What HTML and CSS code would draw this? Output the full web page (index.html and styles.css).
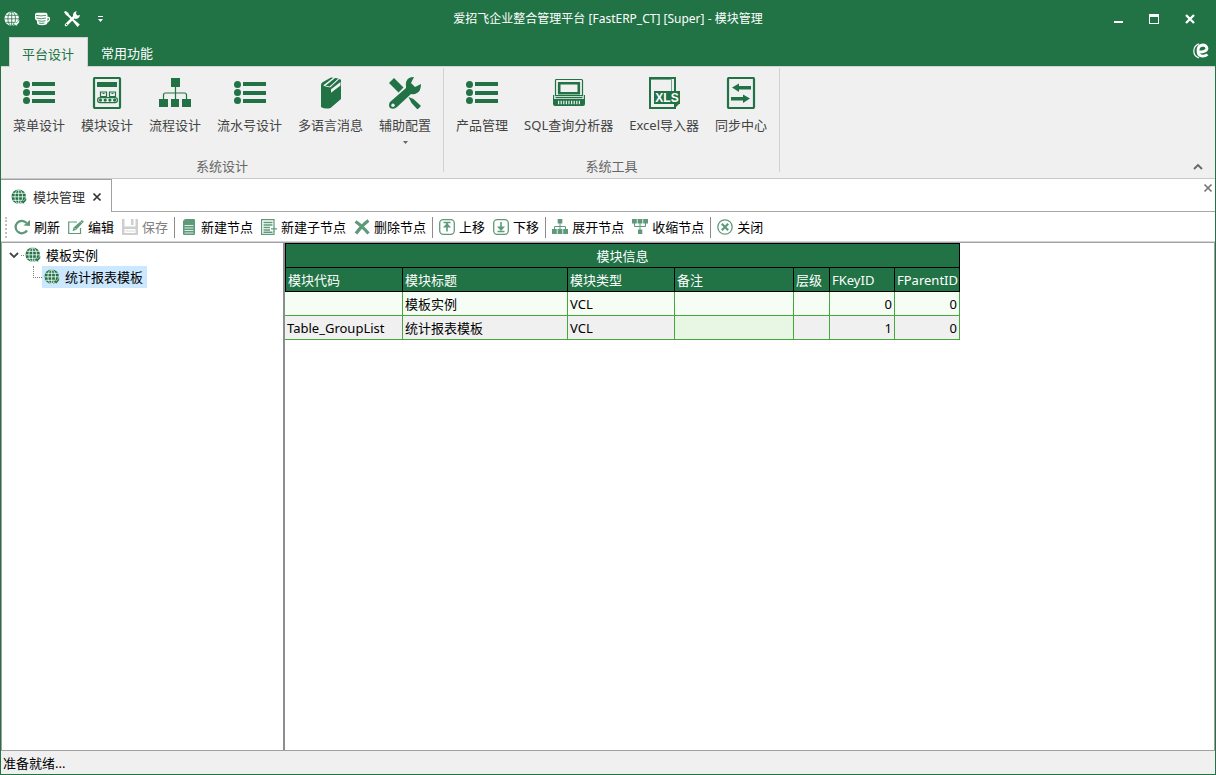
FILE: index.html
```
<!DOCTYPE html>
<html lang="zh-CN">
<head>
<meta charset="utf-8">
<title>爱招飞企业整合管理平台 [FastERP_CT] [Super] - 模块管理</title>
<link rel="stylesheet" href="styles.css">
</head>
<body>
<svg class="sprite" aria-hidden="true">
  <symbol id="globe" viewBox="0 0 16 16">
    <circle cx="7.700" cy="7.700" r="7.200" fill="currentColor"/>
    <g fill="none" stroke="var(--hole)" stroke-width=".8"><path d="M7.700 .8v14M.5 7.800h14.500M1.500 4.300h12.500M1.500 11.300h9"/><ellipse cx="7.700" cy="7.700" rx="3.800" ry="7"/></g>
    <path d="M9 13l2.800-2.300.4 1.200q1.800-.8 2.300-2.900l1.300.6q-.3 2.900-2.800 4.300l.5 1.300z" fill="currentColor" stroke="var(--hole)" stroke-width=".5"/>
  </symbol>
  <symbol id="list" viewBox="0 0 32 32">
    <g fill="currentColor"><circle cx="3.500" cy="7.500" r="3.500"/><circle cx="3.500" cy="15.500" r="3.500"/><circle cx="3.500" cy="23.500" r="3.500"/><path d="M9 5h23v4H9zM9 14h23v4H9zM9 22h23v4H9z"/></g>
  </symbol>
  <symbol id="module" viewBox="0 0 32 32">
    <rect x="3" y="1" width="26" height="30" rx="1" fill="none" stroke="currentColor" stroke-width="2.200"/>
    <path d="M6 5h20v5H6z" fill="currentColor"/>
    <g fill="none" stroke="currentColor" stroke-width="1.200"><path d="M9.500 15h6v4.500h-6zM18.500 15h6v4.500h-6zM11.500 16.500h2M20.500 16.500h2"/><rect x="6.600" y="20.600" width="19.800" height="5" rx="2.400"/></g>
    <g fill="currentColor"><circle cx="9.500" cy="23.100" r="1.600"/><circle cx="14.200" cy="23.100" r="1.600"/><circle cx="18.900" cy="23.100" r="1.600"/><circle cx="23.600" cy="23.100" r="1.600"/></g>
  </symbol>
  <symbol id="org" viewBox="0 0 32 32">
    <path d="M12 1h9v9h-9zM0 22h9v8H0zM12 22h8v8h-8zM23 22h9v8h-9z" fill="currentColor"/>
    <path d="M16.500 10v12M4.500 22v-4q0-2 2-2h19q2 0 2 2v4" fill="none" stroke="currentColor" stroke-width="1.200"/>
  </symbol>
  <symbol id="book" viewBox="0 0 32 32">
    <path d="M6 8Q6 6 8 5L16 .5l2.500.3L8.500 8.500q3 2 7 1.700L24 2l2 .8V22L15.500 31Q10 32.500 6 30z" fill="currentColor"/>
    <path d="M10.500 8.700L20 1l3.500.5-8.500 8z" fill="currentColor"/>
    <path d="M8.500 8.700L18.500 1M14.800 9.800L23.800 1.800" fill="none" stroke="var(--hole)" stroke-width=".9"/>
    <path d="M16 15.800v-3.600L25.500 5v3.600z" fill="var(--hole)"/>
  </symbol>
  <symbol id="tools" viewBox="0 0 32 32">
    <path d="M0 6l5-5 9.500 9.500-5 5z" fill="currentColor"/>
    <path d="M19.500 20l5 2 7.500 7-3.500 3.500-6-6.500z" fill="currentColor"/>
    <path d="M17 9Q16 2 22 .3L25 0l-3 6 4 4 6-3q0 7-4 9-3 2-6 1L8 30q-3 3-7 1-2-3 0-6l16-14z" fill="currentColor"/>
    <circle cx="4" cy="28.200" r="1.700" fill="var(--hole)"/>
  </symbol>
  <symbol id="computer" viewBox="0 0 32 32">
    <path d="M2.500 18.500V3.500q0-1 1-1h25q1 0 1 1v15" fill="none" stroke="currentColor" stroke-width="1.200"/>
    <path d="M6.200 6.200h19.600v10H6.200z" fill="none" stroke="currentColor" stroke-width="2.600"/>
    <path d="M2 18.600h28" stroke="currentColor" stroke-width="1.200"/>
    <path d="M.6 18v4M31.400 18v4" stroke="currentColor" stroke-width="1.200"/>
    <path d="M2.500 20h27v1.200h-27zM0 22h32v5q0 2-2 2H2q-2 0-2-2z" fill="currentColor"/>
    <path d="M5 25.500h23" stroke="var(--hole)" stroke-width="3.600" stroke-dasharray="1.200 1.400"/>
  </symbol>
  <symbol id="sync" viewBox="0 0 32 32">
    <rect x="3" y="1" width="26" height="30" rx="1" fill="none" stroke="currentColor" stroke-width="2.200"/>
    <path d="M7 10.500l7-4v2.500h12v3.500H14V15zM25 21.500l-7-4v2.500H6v3.500h12V26z" fill="currentColor"/>
  </symbol>
  <symbol id="database" viewBox="0 0 16 16">
    <path d="M1 3.500Q1 1.800 3 1.800h8.500q2 0 2 2V12q-1 2.200-5.500 2.200T3 12V10L1 8z" fill="currentColor"/>
    <path d="M12.500 6.500h2q1 0 1 1.500T14 10.500h-2" fill="none" stroke="currentColor" stroke-width="1.300"/>
    <path d="M2 4.300q5 1.200 10 0M2.500 7q4.500 1.500 9.500 0M4 9.700q4 1.200 7.500 0M5 12q3 .9 5.500 0" fill="none" stroke="var(--hole)" stroke-width=".8"/>
  </symbol>
  <symbol id="cross-tools" viewBox="0 0 16 16">
    <path d="M3 3l10 10" stroke="currentColor" stroke-width="2"/>
    <path d="M0 1l1.500-1 3 2v2L4 5 2 4z" fill="currentColor"/>
    <path d="M2 14L11 5" stroke="currentColor" stroke-width="2.600" stroke-linecap="round"/>
    <path d="M9 4q0-3 3.500-4L12 3l1.500 1.500L16 4q-.5 3.500-4 4L9 7zM9.500 11l1.500-1.500 4.800 4L13.500 16z" fill="currentColor"/>
    <circle cx="2.500" cy="13.500" r=".7" fill="var(--hole)"/>
  </symbol>
  <symbol id="refresh" viewBox="0 0 16 16">
    <path d="M13 11.500A6.200 6.200 0 1 1 12.500 4" fill="none" stroke="currentColor" stroke-width="2.300"/>
    <path d="M9.500 6.500L16 7V1z" fill="currentColor"/>
  </symbol>
  <symbol id="edit" viewBox="0 0 16 16">
    <path d="M9 3H.7v11.500h11.800V9" fill="none" stroke="currentColor" stroke-width="1.200"/>
    <path d="M4.500 12l1-3.500L14 1l1.800 1.800L8 11z" fill="currentColor"/><path d="M6 8.500L8 10.500M12.300 2.500l2 2" stroke="#fff" stroke-width=".6"/>
  </symbol>
  <symbol id="save" viewBox="0 0 16 16">
    <path d="M0 0h2.500v7.500h11V0H16v16H0z" fill="currentColor"/><path d="M9 0h2.500v6H9z" fill="currentColor"/><path d="M2.500 10h11v4h-11z" fill="#fff"/><path d="M3.500 12h9" stroke="currentColor" stroke-width=".8"/>
  </symbol>
  <symbol id="sheet" viewBox="0 0 16 16">
    <path d="M4 0h9q1 0 1 1v14q0 1-1 1H3q-1 0-1-1V2z" fill="currentColor"/><path d="M3.500 6.500h9M3.500 9h9M3.500 11.500h9M3.500 14h9" stroke="#fff" stroke-width=".8"/>
  </symbol>
  <symbol id="sheet-add" viewBox="0 0 16 16">
    <path d="M13 7V.6H.6v14.800H13V12.500" fill="none" stroke="currentColor" stroke-width="1.200"/><path d="M2.500 3.500h9M2.500 6h9M2.500 8.500h6.500M2.500 11h6.500M2.500 13.200h9" stroke="currentColor" stroke-width="1.400"/><path d="M10 9.800h6M13 7v6" stroke="currentColor" stroke-width="1.300"/>
  </symbol>
  <symbol id="delete" viewBox="0 0 16 16">
    <path d="M1.500 2.500q6 4 13 12M14.500 1.500q-7 5-12.500 13" fill="none" stroke="currentColor" stroke-width="3.200"/>
  </symbol>
  <symbol id="up" viewBox="0 0 16 16">
    <rect x=".7" y=".7" width="14.600" height="14.600" rx="3.500" fill="none" stroke="currentColor" stroke-width="1.300"/><path d="M4.500 3.500h7M8 4v8.500" fill="none" stroke="currentColor" stroke-width="1.600"/><path d="M4 8.500l4-4.500 4 4.500z" fill="currentColor"/>
  </symbol>
  <symbol id="down" viewBox="0 0 16 16">
    <rect x=".7" y=".7" width="14.600" height="14.600" rx="3.500" fill="none" stroke="currentColor" stroke-width="1.300"/><path d="M4.500 12.500h7M8 3v8" fill="none" stroke="currentColor" stroke-width="1.600"/><path d="M4 7.500l4 4.500 4-4.500z" fill="currentColor"/>
  </symbol>
  <symbol id="expand" viewBox="0 0 16 16">
    <path d="M5.700 0h4.600v4.500H5.700zM0 10h4.800v5H0zM5.600 10h4.800v5H5.600zM11.200 10H16v5h-4.800z" fill="currentColor"/><path d="M8 4v6M2.500 10V7.500h11V10" fill="none" stroke="currentColor"/>
  </symbol>
  <symbol id="collapse" viewBox="0 0 16 16">
    <path d="M0 0h4.800v4.600H0zM5.600 0h4.800v4.600H5.600zM11.200 0H16v4.600h-4.800zM6 10.500h4.300V15H6z" fill="currentColor"/><path d="M8 4v7M2.500 4v3.500h11V4" fill="none" stroke="currentColor"/>
  </symbol>
  <symbol id="circle-x" viewBox="0 0 16 16">
    <circle cx="8" cy="8" r="7.200" fill="none" stroke="currentColor" stroke-width="1.300"/><path d="M4.800 4.800l6.400 6.400M11.200 4.800l-6.400 6.400" stroke="currentColor" stroke-width="2.200"/>
  </symbol>
  <symbol id="small-x" viewBox="0 0 10 10"><path d="M1.500 1.500l7 7M8.500 1.500l-7 7" stroke="currentColor" stroke-width="1.700"/></symbol>
  <symbol id="chevron" viewBox="0 0 10 10"><path d="M1 3l4 4 4-4" fill="none" stroke="currentColor" stroke-width="1.800"/></symbol>
</svg>

<div class="window">
  <header class="titlebar">
    <div class="quick">
      <button class="quick-btn" aria-label="系统"><svg class="icon-s"><use href="#globe"/></svg></button>
      <button class="quick-btn" aria-label="数据库"><svg class="icon-s"><use href="#database"/></svg></button>
      <button class="quick-btn" aria-label="工具"><svg class="icon-s"><use href="#cross-tools"/></svg></button>
      <button class="quick-more" aria-label="自定义快速访问工具栏"><svg class="more-icon" viewBox="0 0 5 6"><path d="M0 0h5v1H0zM0 3h5L2.500 6z" fill="currentColor"/></svg></button>
    </div>
    <h1 class="title">爱招飞企业整合管理平台 [FastERP_CT] [Super] - 模块管理</h1>
    <div class="controls">
      <button class="control" aria-label="最小化"><svg class="icon-c" viewBox="0 0 10 10"><path d="M1 7h9v2H1z" fill="currentColor"/></svg></button>
      <button class="control" aria-label="最大化"><svg class="icon-c" viewBox="0 0 10 10"><path d="M0 0h10v10H0zM1 3v6h8V3z" fill="currentColor" fill-rule="evenodd"/></svg></button>
      <button class="control" aria-label="关闭窗口"><svg class="icon-c" viewBox="0 0 10 10"><path d="M1 1l8 8M9 1L1 9" stroke="currentColor" stroke-width="2.300"/></svg></button>
    </div>
  </header>

  <nav class="ribbon-tabs">
    <button class="ribbon-tab active">平台设计</button>
    <button class="ribbon-tab">常用功能</button>
    <svg class="logo" viewBox="0 0 16 16"><path d="M6 9q7.500 0 8-3.500Q13.500 2 9.500 2 5 2.500 5 7.800q0 5.200 4.500 5.400 3 0 5-1.700" fill="none" stroke="currentColor" stroke-width="2.800"/><path d="M6 .8Q.8 3 .8 8q0 5 5.200 7" fill="none" stroke="currentColor" stroke-width="1.200"/></svg>
  </nav>

  <section class="ribbon">
    <div class="group">
      <div class="group-items">
        <button class="big"><svg class="icon-l"><use href="#list"/></svg>菜单设计</button>
        <button class="big"><svg class="icon-l"><use href="#module"/></svg>模块设计</button>
        <button class="big"><svg class="icon-l"><use href="#org"/></svg>流程设计</button>
        <button class="big"><svg class="icon-l"><use href="#list"/></svg>流水号设计</button>
        <button class="big"><svg class="icon-l"><use href="#book"/></svg>多语言消息</button>
        <button class="big"><svg class="icon-l"><use href="#tools"/></svg>辅助配置<svg class="drop" viewBox="0 0 5 3"><path d="M0 0h5L2.500 3z" fill="currentColor"/></svg></button>
      </div>
      <div class="group-name">系统设计</div>
    </div>
    <div class="group">
      <div class="group-items">
        <button class="big"><svg class="icon-l"><use href="#list"/></svg>产品管理</button>
        <button class="big"><svg class="icon-l"><use href="#computer"/></svg>SQL查询分析器</button>
        <button class="big">
          <svg class="icon-l" viewBox="0 0 32 32">
            <path d="M2 1h25v30H2z" fill="none" stroke="currentColor" stroke-width="2"/>
            <path d="M3 2.500h20.500V14" fill="none" stroke="currentColor" stroke-width=".6"/>
            <path d="M6 14h26v13H6z" fill="currentColor"/>
            <path d="M27 31v-4h4z" fill="currentColor"/>
            <text class="xls-text" x="19" y="25">XLS</text>
          </svg>Excel导入器</button>
        <button class="big"><svg class="icon-l"><use href="#sync"/></svg>同步中心</button>
      </div>
      <div class="group-name">系统工具</div>
    </div>
    <button class="fold" aria-label="折叠功能区"><svg class="icon-x flip"><use href="#chevron"/></svg></button>
  </section>

  <div class="doc-tabs">
    <div class="doc-tab">
      <svg class="icon-s green"><use href="#globe"/></svg>
      <span class="doc-name">模块管理</span>
      <button class="doc-close" aria-label="关闭标签"><svg class="icon-x"><use href="#small-x"/></svg></button>
    </div>
    <button class="close-all" aria-label="关闭页面"><svg class="icon-x"><use href="#small-x"/></svg></button>
  </div>

  <div class="toolbar" role="toolbar">
    <span class="grip"></span>
    <button class="tool"><svg class="icon-s"><use href="#refresh"/></svg>刷新</button>
    <button class="tool"><svg class="icon-s"><use href="#edit"/></svg>编辑</button>
    <button class="tool" disabled><svg class="icon-s"><use href="#save"/></svg>保存</button>
    <span class="sep"></span>
    <button class="tool"><svg class="icon-s"><use href="#sheet"/></svg>新建节点</button>
    <button class="tool"><svg class="icon-s"><use href="#sheet-add"/></svg>新建子节点</button>
    <button class="tool"><svg class="icon-s"><use href="#delete"/></svg>删除节点</button>
    <span class="sep"></span>
    <button class="tool"><svg class="icon-s"><use href="#up"/></svg>上移</button>
    <button class="tool"><svg class="icon-s"><use href="#down"/></svg>下移</button>
    <span class="sep"></span>
    <button class="tool"><svg class="icon-s"><use href="#expand"/></svg>展开节点</button>
    <button class="tool"><svg class="icon-s"><use href="#collapse"/></svg>收缩节点</button>
    <span class="sep"></span>
    <button class="tool"><svg class="icon-s"><use href="#circle-x"/></svg>关闭</button>
  </div>

  <main class="work">
    <aside class="tree">
      <div class="node">
        <button class="toggle" aria-label="折叠节点"><svg class="icon-x"><use href="#chevron"/></svg></button>
        <span class="stub"></span>
        <button class="node-label"><svg class="icon-s green"><use href="#globe"/></svg>模板实例</button>
      </div>
      <div class="node child">
        <span class="elbow"></span>
        <button class="node-label selected"><svg class="icon-s green"><use href="#globe"/></svg>统计报表模板</button>
      </div>
    </aside>
    <section class="sheet">
      <table class="grid">
        <colgroup><col class="c-code"><col class="c-title"><col class="c-type"><col class="c-note"><col class="c-level"><col class="c-id"><col class="c-id"></colgroup>
        <thead>
          <tr><th class="band" colspan="7">模块信息</th></tr>
          <tr><th>模块代码</th><th>模块标题</th><th>模块类型</th><th>备注</th><th>层级</th><th>FKeyID</th><th>FParentID</th></tr>
        </thead>
        <tbody>
          <tr><td></td><td>模板实例</td><td>VCL</td><td></td><td></td><td class="num">0</td><td class="num">0</td></tr>
          <tr class="alt"><td>Table_GroupList</td><td>统计报表模板</td><td>VCL</td><td class="note"></td><td></td><td class="num">1</td><td class="num">0</td></tr>
        </tbody>
      </table>
    </section>
  </main>

  <footer class="status">准备就绪...</footer>
</div>
</body>
</html>
```

FILE: styles.css
```
:root {
  --green: #217346;
  --panel: #f0f0f0;
  --hole: #fff;
}

* { box-sizing: border-box; }

body {
  margin: 0;
  font: 13px/18px "Noto Sans", "Noto Sans CJK SC", sans-serif;
  color: #000;
}

button {
  border: 0;
  margin: 0;
  padding: 0;
  background: none;
  font: inherit;
  color: inherit;
}

svg { display: block; flex: none; }
.sprite { position: absolute; width: 0; height: 0; }
.icon-s { width: 16px; height: 16px; }
.icon-l { width: 32px; height: 32px; color: var(--green); }
.icon-c, .icon-x { width: 10px; height: 10px; }
.green { color: var(--green); }
.xls-text { font: bold 12px "Liberation Sans", sans-serif; fill: #fff; text-anchor: middle; }

.window {
  display: flex;
  flex-direction: column;
  min-height: 100vh;
  border: 1px solid var(--green);
  border-top: 0;
  background: #fff;
}

/* Title bar */
.titlebar {
  --hole: var(--green);
  display: grid;
  grid-template-columns: 1fr auto 1fr;
  align-items: center;
  height: 37px;
  background: var(--green);
  color: #fff;
}
.quick { display: flex; align-items: center; gap: 14px; padding-left: 3px; }
.quick-more { padding-left: 4px; }
.more-icon { width: 5px; height: 6px; }
.title { margin: 0; font-size: 12px; font-weight: 400; }
.controls { display: flex; justify-content: flex-end; gap: 26px; padding-right: 20px; }

/* Ribbon */
.ribbon-tabs {
  display: flex;
  align-items: stretch;
  height: 29px;
  padding: 0 5px 0 8px;
  background: var(--green);
  color: #fff;
}
.ribbon-tab { padding: 2px 13px 0; }
.ribbon-tab.active {
  position: relative;
  margin-bottom: -1px;
  padding: 2px 13px 0 12px;
  border: 1px solid #d2d2d2;
  border-bottom: 0;
  background: var(--panel);
  color: var(--green);
}
.logo { width: 16px; height: 16px; margin: 6px 1px 0 auto; }
.ribbon {
  --hole: var(--panel);
  display: flex;
  height: 113px;
  border-top: 1px solid #d2d2d2;
  border-bottom: 1px solid #c8c8c8;
  background: var(--panel);
  color: #444;
}
.group {
  display: flex;
  flex-direction: column;
  justify-content: space-between;
  margin: 1px 0 6px;
  padding: 0 4px;
  border-right: 1px solid #d2d2d2;
}
.group-items { display: flex; align-items: flex-start; }
.big {
  display: flex;
  flex-direction: column;
  align-items: center;
  padding: 9px 8px 0;
  white-space: nowrap;
}
.big .icon-l { margin-bottom: 7px; }
.drop { width: 5px; height: 3px; margin-top: 7px; color: #666; }
.group-name { text-align: center; color: #666; line-height: 12px; }
.fold { align-self: flex-end; margin: 0 12px 6px auto; color: #666; }
.flip { transform: rotate(180deg); }

/* Document tabs */
.doc-tabs {
  display: flex;
  justify-content: space-between;
  height: 33px;
  border-bottom: 1px solid #a8a8a8;
}
.doc-tab {
  display: flex;
  align-items: center;
  height: 33px;
  padding: 1px 9px 0 10px;
  border: 1px solid #a0a0a0;
  border-width: 1px 1px 0 0;
  background: #fff;
  color: #333;
}
.doc-name { margin: 0 7px 0 6px; }
.close-all { align-self: flex-start; padding: 4px 2px 0 0; color: #777; }

/* Toolbar */
.toolbar {
  display: flex;
  align-items: center;
  height: 31px;
  padding-left: 4px;
  border-bottom: 1px solid #a0a4aa;
  box-shadow: inset 0 -1px #d4d4d4;
}
.grip { height: 21px; margin-right: 3px; border-left: 2px dotted #c0c0c0; }
.tool { display: flex; align-items: center; gap: 4px; padding: 0 4px; white-space: nowrap; }
.tool .icon-s { color: #5e9a7a; }
.tool:disabled { color: #808080; }
.tool:disabled .icon-s { color: #cfcfcf; }
.sep { width: 1px; height: 21px; margin: 0 2px; background: #8c8c8c; }

/* Work area */
.work {
  display: flex;
  flex: 1;
  border: 1px solid #a0a0a0;
  border-width: 0 1px 1px;
}
.tree { flex: none; width: 283px; padding-top: 1px; border-right: 2px solid #8a8d92; }
.node { display: flex; align-items: center; height: 22px; padding-left: 7px; }
.node.child { padding-left: 31px; }
.toggle { color: #444; }
.stub { width: 3px; margin: 0 -1px 0 2px; border-bottom: 1px dotted #808080; }
.elbow { align-self: flex-start; width: 9px; height: 12px; border: 1px dotted #808080; border-width: 0 0 1px 1px; }
.node-label { display: flex; align-items: center; gap: 5px; height: 22px; padding: 0 4px 0 2px; }
.selected { background: #cce8ff; }

.sheet { flex: 1; }
.grid {
  table-layout: fixed;
  width: 675px;
  border-spacing: 0;
}
.c-code { width: 118px; }
.c-title { width: 165px; }
.c-type { width: 107px; }
.c-note { width: 119px; }
.c-level { width: 36px; }
.c-id { width: 65px; }
.grid th, .grid td {
  height: 24px;
  padding: 0 2px;
  border: 0 solid #45a83c;
  border-width: 0 1px 1px 0;
  text-align: left;
  font-weight: 400;
  white-space: nowrap;
}
.grid th { border-color: #000; background: var(--green); color: #fff; }
.grid th:first-child { border-left-width: 1px; }
.grid .band { height: 25px; border-top-width: 1px; text-align: center; }
.grid td { background: #f5fdf5; }
.grid .alt td { background: #f0f0f0; }
.grid .alt .note { background: #e8f6e4; }
.grid .num { text-align: right; }

.status { height: 23px; padding: 3px 2px; background: var(--panel); }
```
